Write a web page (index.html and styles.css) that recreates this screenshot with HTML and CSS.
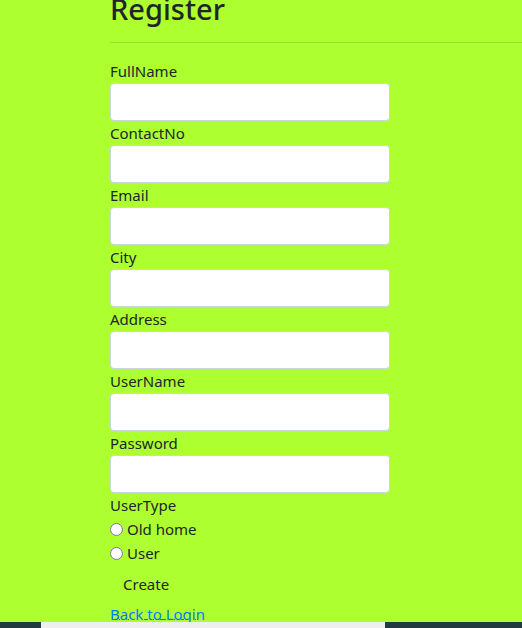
FILE: index.html
```html
<!DOCTYPE html>
<html>
<head>
<meta charset="utf-8">
<link rel="stylesheet" href="styles.css">
</head>
<body>
<div class="page">
  <main class="content">
    <h2 class="title">Register</h2>
    <hr class="rule">
    <form class="form">
      <label class="lbl">FullName</label>
      <input class="field" type="text">
      <label class="lbl">ContactNo</label>
      <input class="field" type="text">
      <label class="lbl">Email</label>
      <input class="field" type="text">
      <label class="lbl">City</label>
      <input class="field" type="text">
      <label class="lbl">Address</label>
      <input class="field" type="text">
      <label class="lbl">UserName</label>
      <input class="field" type="text">
      <label class="lbl">Password</label>
      <input class="field" type="password">
      <label class="lbl">UserType</label>
      <label class="radio-row"><input class="radio" type="radio" name="ut">Old home</label>
      <label class="radio-row"><input class="radio" type="radio" name="ut">User</label>
      <button class="btn" type="button">Create</button>
      <a class="back" href="#">Back to Login</a>
    </form>
  </main>
  <div class="strip">
    <div class="strip-mid"></div>
  </div>
</div>
</body>
</html>
```
FILE: styles.css
```css
html, body {
  margin: 0;
  padding: 0;
  background: #adff2f;
  height: 100%;
  overflow: hidden;
}
body {
  font-family: "Noto Sans", "Liberation Sans", sans-serif;
  font-size: 15px;
  line-height: 24px;
  color: #212529;
}
.page {
  display: flex;
  flex-direction: column;
  height: 628px;
}
.content {
  flex: 1;
  padding-left: 110px;
  margin-top: -10px;
  min-height: 0;
}
.title {
  margin: 0;
  font-size: 29px;
  font-weight: 500;
  line-height: 38px;
  color: #212529;
}
.rule {
  margin: 14px 0 16px 0;
  border: 0;
  border-top: 1px solid rgba(0,0,0,0.12);
}
.form {
  display: flex;
  flex-direction: column;
  align-items: flex-start;
}
.lbl {
  display: block;
  height: 24px;
}
.field {
  box-sizing: border-box;
  width: 280px;
  height: 38px;
  margin: 0;
  border: 1px solid #ced4da;
  border-radius: 4px;
  background: #fff;
}
.radio-row {
  display: flex;
  align-items: center;
  height: 24px;
}
.radio {
  margin: 0 4px 0 0;
  width: 13px;
  height: 13px;
}
.btn {
  font: inherit;
  color: #212529;
  background: transparent;
  border: 1px solid transparent;
  padding: 6px 12px;
  height: 38px;
  line-height: 24px;
}
.back {
  color: #007bff;
  text-decoration: underline;
  text-decoration-thickness: 1px;
  text-underline-offset: -1px;
  line-height: 22px;
}
.strip {
  flex: 0 0 6px;
  background: #233a40;
  display: flex;
  padding-left: 41px;
}
.strip-mid {
  width: 344px;
  background: #efefef;
}
```
